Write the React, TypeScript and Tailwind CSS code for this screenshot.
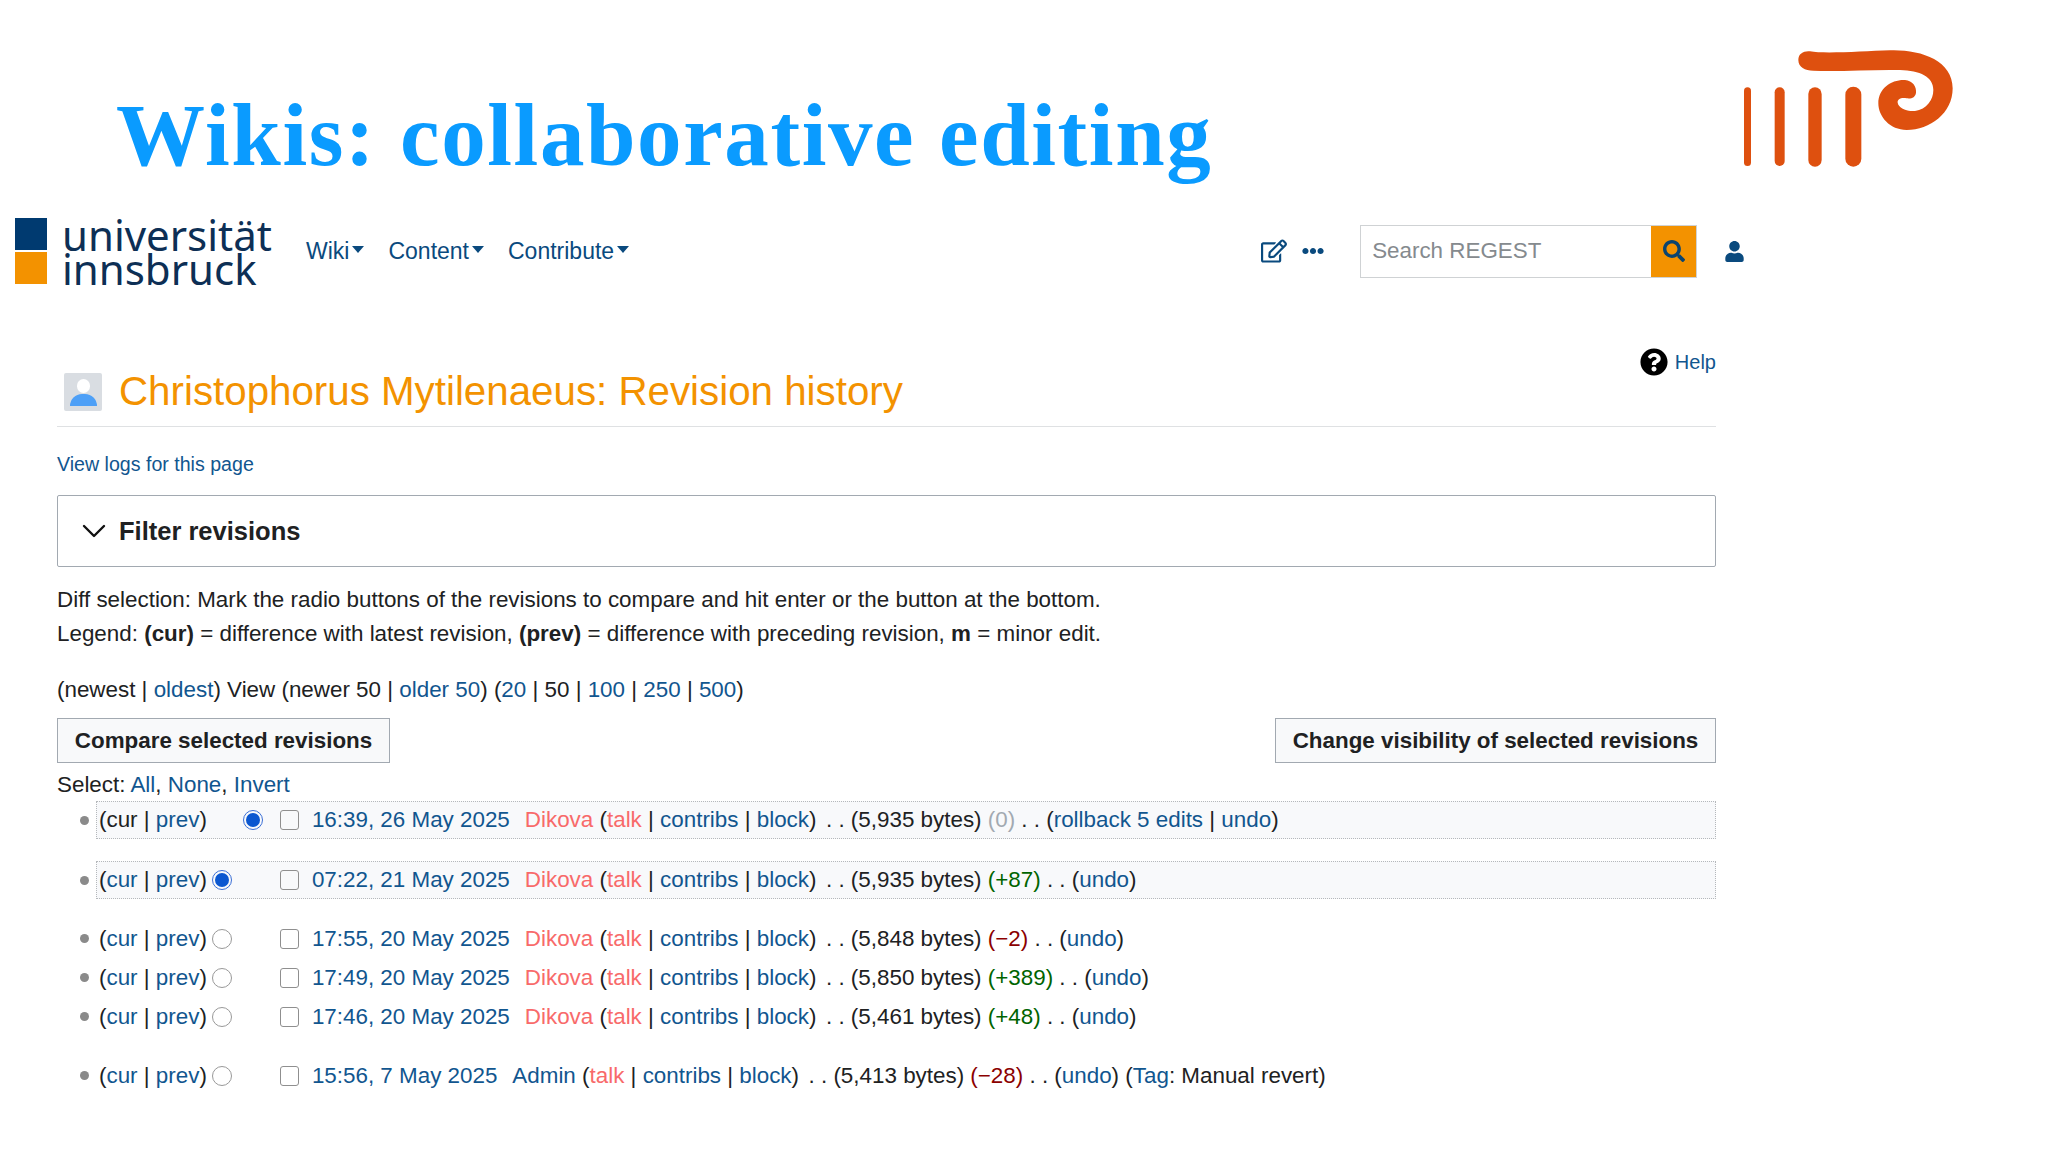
import { FaEllipsisH, FaQuestionCircle, FaRegEdit, FaSearch, FaUser } from "react-icons/fa";

const A = ({ children, className = "" }: { children: React.ReactNode; className?: string }) => (
  <a className={`text-[#11568f] ${className}`}>{children}</a>
);
const Red = ({ children }: { children: React.ReactNode }) => <a className="text-[#f86a6a]">{children}</a>;

const NavItem = ({ label }: { label: string }) => (
  <span className="flex items-center text-[#0a4a7e] text-[23px]">
    {label}
    <span className="ml-[3px] mb-1 border-x-[6px] border-t-[7px] border-x-transparent border-t-[#0a4a7e]" />
  </span>
);

const Radio = ({ on }: { on?: boolean }) =>
  on ? (
    <span className="w-5 h-5 rounded-full border border-[#3b6fd6] flex items-center justify-center shrink-0">
      <span className="w-3.5 h-3.5 rounded-full bg-[#0b57d0]" />
    </span>
  ) : (
    <span className="w-5 h-5 rounded-full border border-[#999] shrink-0" />
  );

const Check = () => <span className="w-[19px] h-5 rounded-[3px] border border-[#8f8f8f] shrink-0" />;

type Row = {
  date: string;
  user: string;
  bytes: string;
  diff: string;
  tone: string;
  radio?: boolean;
  boxed?: boolean;
  plainCur?: boolean;
  rollback?: boolean;
  tag?: boolean;
  className: string;
};

const rows: Row[] = [
  { date: "16:39, 26 May 2025", user: "Dikova", bytes: "5,935", diff: "(0)", tone: "text-[#a2a9b1]", radio: true, boxed: true, plainCur: true, rollback: true, className: "h-[38px] mb-[22px]" },
  { date: "07:22, 21 May 2025", user: "Dikova", bytes: "5,935", diff: "(+87)", tone: "text-[#006400]", radio: true, boxed: true, className: "h-[38px] mb-[20px]" },
  { date: "17:55, 20 May 2025", user: "Dikova", bytes: "5,848", diff: "(−2)", tone: "text-[#8b0000]", className: "h-[39px]" },
  { date: "17:49, 20 May 2025", user: "Dikova", bytes: "5,850", diff: "(+389)", tone: "text-[#006400]", className: "h-[39px]" },
  { date: "17:46, 20 May 2025", user: "Dikova", bytes: "5,461", diff: "(+48)", tone: "text-[#006400]", className: "h-[39px] mb-5" },
  { date: "15:56, 7 May 2025", user: "Admin", bytes: "5,413", diff: "(−28)", tone: "text-[#8b0000]", tag: true, className: "h-[39px]" },
];

const RevisionRow = ({ row }: { row: Row }) => (
  <li className={`flex items-center whitespace-nowrap ${row.className}`}>
    <span className="w-[9px] h-[9px] rounded-full bg-[#8a8a8a] ml-[23px] mr-[9px] shrink-0" />
    <div
      className={`flex items-center h-full pl-[1px] ${
        row.boxed ? "flex-1 -ml-[2px] pl-[2px] border border-dotted border-[#b5b8bb] bg-[#f8f9fb]" : ""
      }`}
    >
      <span>
        ({row.plainCur ? "cur" : <A>cur</A>} | <A>prev</A>)
      </span>
      <span className={`flex shrink-0 ${row.plainCur ? "ml-[36px] mr-[17px]" : "ml-[5px] mr-[48px]"}`}>
        <Radio on={row.radio} />
      </span>
      <Check />
      <A className="ml-[13px]">{row.date}</A>
      <span className="ml-[15px]">
        {row.user === "Admin" ? <A>Admin</A> : <Red>{row.user}</Red>} (<Red>talk</Red> | <A>contribs</A> | <A>block</A>){" "}
        <span className="-ml-[3px]">&nbsp;. . </span>({row.bytes} bytes) <span className={row.tone}>{row.diff}</span> . . (
        {row.rollback && (
          <>
            <A>rollback 5 edits</A> |{" "}
          </>
        )}
        <A>undo</A>)
        {row.tag && (
          <>
            {" "}
            (<A>Tag</A>: Manual revert)
          </>
        )}
      </span>
    </div>
  </li>
);

export default function App() {
  return (
    <div className="w-[2048px] h-[1152px] bg-white overflow-hidden font-['Liberation_Sans',sans-serif] text-[22.4px] text-[#202122]">
      <header className="flex items-start justify-between h-[217px]">
        <h1 className="ml-[116px] mt-[85px] font-['Liberation_Serif',serif] font-bold text-[89px] tracking-[1.6px] leading-[100px] text-[#0a9bff] whitespace-nowrap">
          Wikis: collaborative editing
        </h1>
        <svg className="mt-[40px] mr-[78px]" width="240" height="140" viewBox="0 0 720 420">
          <g fill="#de500f">
            <rect x="42" y="142" width="21" height="236" rx="10.5" />
            <rect x="134" y="142" width="30" height="236" rx="15" />
            <rect x="235" y="142" width="40" height="238" rx="20" />
            <rect x="346" y="140" width="48" height="240" rx="24" />
          </g>
          <path
            d="M205 60C205 40 222 32 240 34C280 42 400 34 480 31C570 28 668 60 668 145C668 220 600 270 530 270C480 270 445 230 445 190C445 145 485 118 525 120C548 122 560 140 558 158C556 172 545 177 530 175C512 172 502 178 503 188C505 203 530 215 555 213C590 208 610 180 610 150C610 110 570 92 510 90C430 88 330 95 250 92C225 92 205 82 205 60Z"
            fill="#de500f"
          />
        </svg>
      </header>

      <nav className="flex items-center h-[68px]">
        <div className="flex flex-col gap-[2px] ml-[15px] shrink-0">
          <span className="w-[32px] h-[32px] bg-[#003a70]" />
          <span className="w-[32px] h-[32px] bg-[#f39200]" />
        </div>
        <div className="ml-[15px] w-[244px] font-['Noto_Sans',sans-serif] text-[#0d2f55] text-[42px] leading-[34px] mt-[2px]">
          <div>universität</div>
          <div>innsbruck</div>
        </div>
        <div className="flex gap-[24px]">
          <NavItem label="Wiki" />
          <NavItem label="Content" />
          <NavItem label="Contribute" />
        </div>
        <FaRegEdit className="ml-[632px] text-[#0a4a7e]" size={26} />
        <FaEllipsisH className="ml-[15px] text-[#0a4a7e]" size={22} />
        <div className="ml-[36px] w-[337px] h-[53px] border border-[#cfd2d4] flex items-center shrink-0">
          <span className="flex-1 pl-[11px] text-[#858a8e]">Search REGEST</span>
          <span className="w-[45px] h-full bg-[#f39200] flex items-center justify-center">
            <FaSearch size={22} className="text-[#0a4470]" />
          </span>
        </div>
        <FaUser className="ml-[27px] text-[#0a4a7e]" size={21} />
      </nav>

      <main className="w-[1659px] ml-[57px]">
        <div className="flex justify-end items-center h-[28px] mt-[63px] gap-[7px] text-[20px] text-[#11568f]">
          <FaQuestionCircle size={28} className="text-black" />
          Help
        </div>
        <div className="flex items-center h-[51px] border-b border-[#dfe1e3] pb-[18px]">
          <span className="ml-[7px] w-[38px] h-[38px] rounded-[2px] bg-[#d9dde2] flex flex-col items-center justify-end pb-[5px] shrink-0">
            <span className="w-[13px] h-[14px] rounded-full bg-white mb-[1px]" />
            <span className="w-[27px] h-[12px] rounded-t-full bg-[#4ea0f7]" />
          </span>
          <h2 className="ml-[17px] text-[40.3px] text-[#f39200] whitespace-nowrap">Christophorus Mytilenaeus: Revision history</h2>
        </div>
        <p className="mt-[25px] text-[19.6px] leading-[24px]"><A>View logs for this page</A></p>
        <div className="mt-[19px] h-[72px] border border-[#a2a9b1] rounded-[2px] flex items-center pl-[24px] gap-[13px] font-bold text-[25.5px]">
          <svg width="24" height="24" viewBox="0 0 24 24" fill="none" stroke="#111" strokeWidth="2.4" strokeLinecap="round" strokeLinejoin="round">
            <polyline points="2,7 12,17 22,7" />
          </svg>
          Filter revisions
        </div>
        <p className="mt-[16px] leading-[34px]">
          Diff selection: Mark the radio buttons of the revisions to compare and hit enter or the button at the bottom.
          <br />
          Legend: <b>(cur)</b> = difference with latest revision, <b>(prev)</b> = difference with preceding revision, <b>m</b> = minor edit.
        </p>
        <p className="mt-[22px] leading-[34px]">
          (newest | <A>oldest</A>) View (newer 50 | <A>older 50</A>) (<A>20</A> | 50 | <A>100</A> | <A>250</A> | <A>500</A>)
        </p>
        <div className="flex justify-between mt-[11px]">
          <button className="h-[45px] w-[333px] border border-[#a2a9b1] bg-[#f8f9fa] font-bold">Compare selected revisions</button>
          <button className="h-[45px] w-[441px] border border-[#a2a9b1] bg-[#f8f9fa] font-bold">Change visibility of selected revisions</button>
        </div>
        <p className="mt-[5px] leading-[34px]">
          Select: <A>All</A>, <A>None</A>, <A>Invert</A>
        </p>
        <ul className="-mt-[1px]">
          {rows.map((r) => (
            <RevisionRow key={r.date} row={r} />
          ))}
        </ul>
      </main>
    </div>
  );
}
